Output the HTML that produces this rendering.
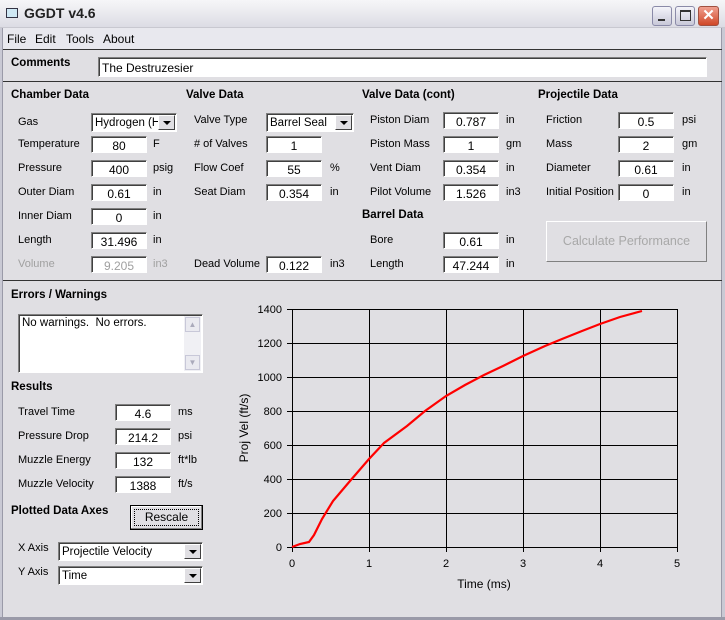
<!DOCTYPE html>
<html><head><style>
*{margin:0;padding:0;box-sizing:border-box}
body{width:725px;height:620px;overflow:hidden;background:#e0dfe3;font-family:"Liberation Sans",Arial,sans-serif;font-size:11px;color:#000;position:relative}
.a{position:absolute;white-space:nowrap}
.h{position:absolute;font-weight:bold;font-size:11.5px;white-space:nowrap}
.b{position:absolute;width:56px;height:17px;background:#fff;border:1px solid;border-color:#808080 #fff #fff #808080;box-shadow:inset 1px 1px #404040;text-align:center;font-size:12px;line-height:17px;padding-top:1px}
.dd{position:absolute;height:19px;background:#fff;border:1px solid;border-color:#808080 #fff #fff #808080;box-shadow:inset 1px 1px #404040;font-size:11.5px;line-height:18px;padding-left:3px;overflow:hidden}
.dd i{position:absolute;right:1px;top:1px;width:17px;height:15px;background:#e0dfe3;border:1px solid;border-color:#fff #404040 #404040 #fff}
.dd i:after{content:"";position:absolute;left:4px;top:5px;border-left:4px solid transparent;border-right:4px solid transparent;border-top:4px solid #000}
.line{position:absolute;left:3px;width:719px;height:1px;background:#333}
</style></head><body>
<div class="a" style="left:0;top:0;width:725px;height:28px;background:linear-gradient(#f6f6f8,#dcdce4);border-bottom:1px solid #c8c8d0"></div>
<div class="a" style="left:6px;top:8px;width:12px;height:10px;border:1px solid #334;background:#cfe8f4"></div>
<div class="a" style="left:24px;top:5px;font-weight:bold;font-size:14px;color:#222">GGDT v4.6</div>
<div class="a" style="left:652px;top:6px;width:20px;height:20px;border:1px solid #8a8aa8;border-radius:3px;background:linear-gradient(#f4f4fa,#c8c8d8)"><div class="a" style="left:5px;top:12px;width:7px;height:2px;background:#333"></div></div>
<div class="a" style="left:675px;top:6px;width:20px;height:20px;border:1px solid #8a8aa8;border-radius:3px;background:linear-gradient(#f4f4fa,#c8c8d8)"><div class="a" style="left:4px;top:3px;width:11px;height:11px;border:1px solid #333;border-top-width:2px"></div></div>
<div class="a" style="left:698px;top:6px;width:21px;height:20px;border:1px solid #a05040;border-radius:3px;background:linear-gradient(#f0a090,#d04828);color:#fff;font-size:15px;font-weight:bold;text-align:center;line-height:18px">✕</div>
<div class="a" style="left:0;top:28px;width:725px;height:21px;background:#e8e8ee"></div>
<div class="a" style="left:7px;top:32px;font-size:12px">File</div>
<div class="a" style="left:35px;top:32px;font-size:12px">Edit</div>
<div class="a" style="left:66px;top:32px;font-size:12px">Tools</div>
<div class="a" style="left:103px;top:32px;font-size:12px">About</div>
<div class="a" style="left:0;top:28px;width:3px;height:592px;background:#c9c9d4;border-right:1px solid #9a9aa8"></div>
<div class="a" style="left:721px;top:28px;width:4px;height:592px;background:#c9c9d4;border-left:1px solid #9a9aa8"></div>
<div class="a" style="left:0;top:617px;width:725px;height:3px;background:#9a9aa8"></div>
<div class="line" style="top:49px"></div>
<div class="line" style="top:81px"></div>
<div class="line" style="top:280px"></div>
<div class="h" style="left:11px;top:57px">Comments</div>
<div class="b" style="left:98px;top:57px;width:609px;height:20px;text-align:left;padding-left:3px;line-height:18px">The Destruzesier</div>
<div class="h" style="left:11px;top:89px">Chamber Data</div>
<div class="a" style="left:18px;top:116px">Gas</div>
<div class="dd" style="left:91px;top:113px;width:86px">Hydrogen (H2<i></i></div>
<div class="a" style="left:18px;top:138px">Temperature</div><div class="b" style="left:91px;top:136px">80</div><div class="a" style="left:153px;top:138px">F</div>
<div class="a" style="left:18px;top:162px">Pressure</div><div class="b" style="left:91px;top:160px">400</div><div class="a" style="left:153px;top:162px">psig</div>
<div class="a" style="left:18px;top:186px">Outer Diam</div><div class="b" style="left:91px;top:184px">0.61</div><div class="a" style="left:153px;top:186px">in</div>
<div class="a" style="left:18px;top:210px">Inner Diam</div><div class="b" style="left:91px;top:208px">0</div><div class="a" style="left:153px;top:210px">in</div>
<div class="a" style="left:18px;top:234px">Length</div><div class="b" style="left:91px;top:232px">31.496</div><div class="a" style="left:153px;top:234px">in</div>
<div class="a" style="left:18px;top:258px;color:#a0a0a0">Volume</div><div class="b" style="left:91px;top:256px;color:#a0a0a0">9.205</div><div class="a" style="left:153px;top:258px;color:#a0a0a0">in3</div>
<div class="h" style="left:186px;top:89px">Valve Data</div>
<div class="a" style="left:194px;top:114px">Valve Type</div>
<div class="dd" style="left:266px;top:113px;width:88px">Barrel Seal<i></i></div>
<div class="a" style="left:194px;top:138px"># of Valves</div><div class="b" style="left:266px;top:136px">1</div>
<div class="a" style="left:194px;top:162px">Flow Coef</div><div class="b" style="left:266px;top:160px">55</div><div class="a" style="left:330px;top:162px">%</div>
<div class="a" style="left:194px;top:186px">Seat Diam</div><div class="b" style="left:266px;top:184px">0.354</div><div class="a" style="left:330px;top:186px">in</div>
<div class="a" style="left:194px;top:258px">Dead Volume</div><div class="b" style="left:266px;top:256px">0.122</div><div class="a" style="left:330px;top:258px">in3</div>
<div class="h" style="left:362px;top:89px">Valve Data (cont)</div>
<div class="a" style="left:370px;top:114px">Piston Diam</div><div class="b" style="left:443px;top:112px">0.787</div><div class="a" style="left:506px;top:114px">in</div>
<div class="a" style="left:370px;top:138px">Piston Mass</div><div class="b" style="left:443px;top:136px">1</div><div class="a" style="left:506px;top:138px">gm</div>
<div class="a" style="left:370px;top:162px">Vent Diam</div><div class="b" style="left:443px;top:160px">0.354</div><div class="a" style="left:506px;top:162px">in</div>
<div class="a" style="left:370px;top:186px">Pilot Volume</div><div class="b" style="left:443px;top:184px">1.526</div><div class="a" style="left:506px;top:186px">in3</div>
<div class="h" style="left:362px;top:209px">Barrel Data</div>
<div class="a" style="left:370px;top:234px">Bore</div><div class="b" style="left:443px;top:232px">0.61</div><div class="a" style="left:506px;top:234px">in</div>
<div class="a" style="left:370px;top:258px">Length</div><div class="b" style="left:443px;top:256px">47.244</div><div class="a" style="left:506px;top:258px">in</div>
<div class="h" style="left:538px;top:89px">Projectile Data</div>
<div class="a" style="left:546px;top:114px">Friction</div><div class="b" style="left:618px;top:112px">0.5</div><div class="a" style="left:682px;top:114px">psi</div>
<div class="a" style="left:546px;top:138px">Mass</div><div class="b" style="left:618px;top:136px">2</div><div class="a" style="left:682px;top:138px">gm</div>
<div class="a" style="left:546px;top:162px">Diameter</div><div class="b" style="left:618px;top:160px">0.61</div><div class="a" style="left:682px;top:162px">in</div>
<div class="a" style="left:546px;top:186px">Initial Position</div><div class="b" style="left:618px;top:184px">0</div><div class="a" style="left:682px;top:186px">in</div>
<div class="a" style="left:546px;top:221px;width:161px;height:41px;border:1px solid;border-color:#fff #808080 #808080 #fff;text-align:center;line-height:39px;font-size:12.5px;color:#a8a8a8">Calculate Performance</div>
<div class="h" style="left:11px;top:289px">Errors / Warnings</div>
<div class="a" style="left:18px;top:314px;width:185px;height:59px;background:#fff;border:1px solid;border-color:#808080 #fff #fff #808080;box-shadow:inset 1px 1px #404040;font-size:11.5px;padding:2px 3px">No warnings.&nbsp; No errors.
<div class="a" style="right:1px;top:1px;width:17px;height:55px;background:#f0f0f4"></div>
<div class="a" style="right:2px;top:2px;width:15px;height:15px;border:1px solid #c8c8d8;background:#eaeaf0;color:#aab;font-size:8px;text-align:center;line-height:13px">▲</div>
<div class="a" style="right:2px;bottom:2px;width:15px;height:15px;border:1px solid #c8c8d8;background:#eaeaf0;color:#aab;font-size:8px;text-align:center;line-height:13px">▼</div>
</div>
<div class="h" style="left:11px;top:381px">Results</div>
<div class="a" style="left:18px;top:406px">Travel Time</div><div class="b" style="left:115px;top:404px">4.6</div><div class="a" style="left:178px;top:406px">ms</div>
<div class="a" style="left:18px;top:430px">Pressure Drop</div><div class="b" style="left:115px;top:428px">214.2</div><div class="a" style="left:178px;top:430px">psi</div>
<div class="a" style="left:18px;top:454px">Muzzle Energy</div><div class="b" style="left:115px;top:452px">132</div><div class="a" style="left:178px;top:454px">ft*lb</div>
<div class="a" style="left:18px;top:478px">Muzzle Velocity</div><div class="b" style="left:115px;top:476px">1388</div><div class="a" style="left:178px;top:478px">ft/s</div>
<div class="h" style="left:11px;top:505px">Plotted Data Axes</div>
<div class="a" style="left:130px;top:505px;width:73px;height:25px;border:1px solid #000;box-shadow:inset -1px -1px #808080,inset 1px 1px #fff;text-align:center;font-size:12px;line-height:22px"><div class="a" style="left:3px;top:3px;right:3px;bottom:3px;border:1px dotted #000"></div>Rescale</div>
<div class="a" style="left:18px;top:542px">X Axis</div>
<div class="dd" style="left:58px;top:542px;width:145px">Projectile Velocity<i></i></div>
<div class="a" style="left:18px;top:566px">Y Axis</div>
<div class="dd" style="left:58px;top:566px;width:145px">Time<i></i></div>
<svg class="a" style="left:0;top:0" width="725" height="620">
<g stroke="#000" stroke-width="1" shape-rendering="crispEdges">
<line x1="287" y1="309.5" x2="677" y2="309.5"/>
<line x1="287" y1="343.5" x2="677" y2="343.5"/>
<line x1="287" y1="377.5" x2="677" y2="377.5"/>
<line x1="287" y1="411.5" x2="677" y2="411.5"/>
<line x1="287" y1="445.5" x2="677" y2="445.5"/>
<line x1="287" y1="479.5" x2="677" y2="479.5"/>
<line x1="287" y1="513.5" x2="677" y2="513.5"/>
<line x1="287" y1="547.5" x2="677" y2="547.5"/>
<line x1="292.5" y1="309" x2="292.5" y2="552"/>
<line x1="369.5" y1="309" x2="369.5" y2="552"/>
<line x1="446.5" y1="309" x2="446.5" y2="552"/>
<line x1="523.5" y1="309" x2="523.5" y2="552"/>
<line x1="600.5" y1="309" x2="600.5" y2="552"/>
<line x1="677.5" y1="309" x2="677.5" y2="552"/>
</g>
<polyline fill="none" stroke="#f00" stroke-width="2.2" points="292,547 300,544 309,542 314,535 322,519 333,501 350,481 369,459 384,443 407,426 425,411 446,396 465,385 484,375 503,366 523,356 545,346 562,339 582,331 600,324 620,317 642,311"/>
<g font-family="Liberation Sans, Arial, sans-serif" font-size="11" text-anchor="end">
<text x="282" y="313">1400</text><text x="282" y="347">1200</text><text x="282" y="381">1000</text>
<text x="282" y="415">800</text><text x="282" y="449">600</text><text x="282" y="483">400</text>
<text x="282" y="517">200</text><text x="282" y="551">0</text>
</g>
<g font-family="Liberation Sans, Arial, sans-serif" font-size="11" text-anchor="middle">
<text x="292" y="567">0</text><text x="369" y="567">1</text><text x="446" y="567">2</text>
<text x="523" y="567">3</text><text x="600" y="567">4</text><text x="677" y="567">5</text>
<text x="484" y="588" font-size="12">Time (ms)</text>
<text transform="translate(248,428) rotate(-90)" font-size="12">Proj Vel (ft/s)</text>
</g>
</svg>
</body></html>
